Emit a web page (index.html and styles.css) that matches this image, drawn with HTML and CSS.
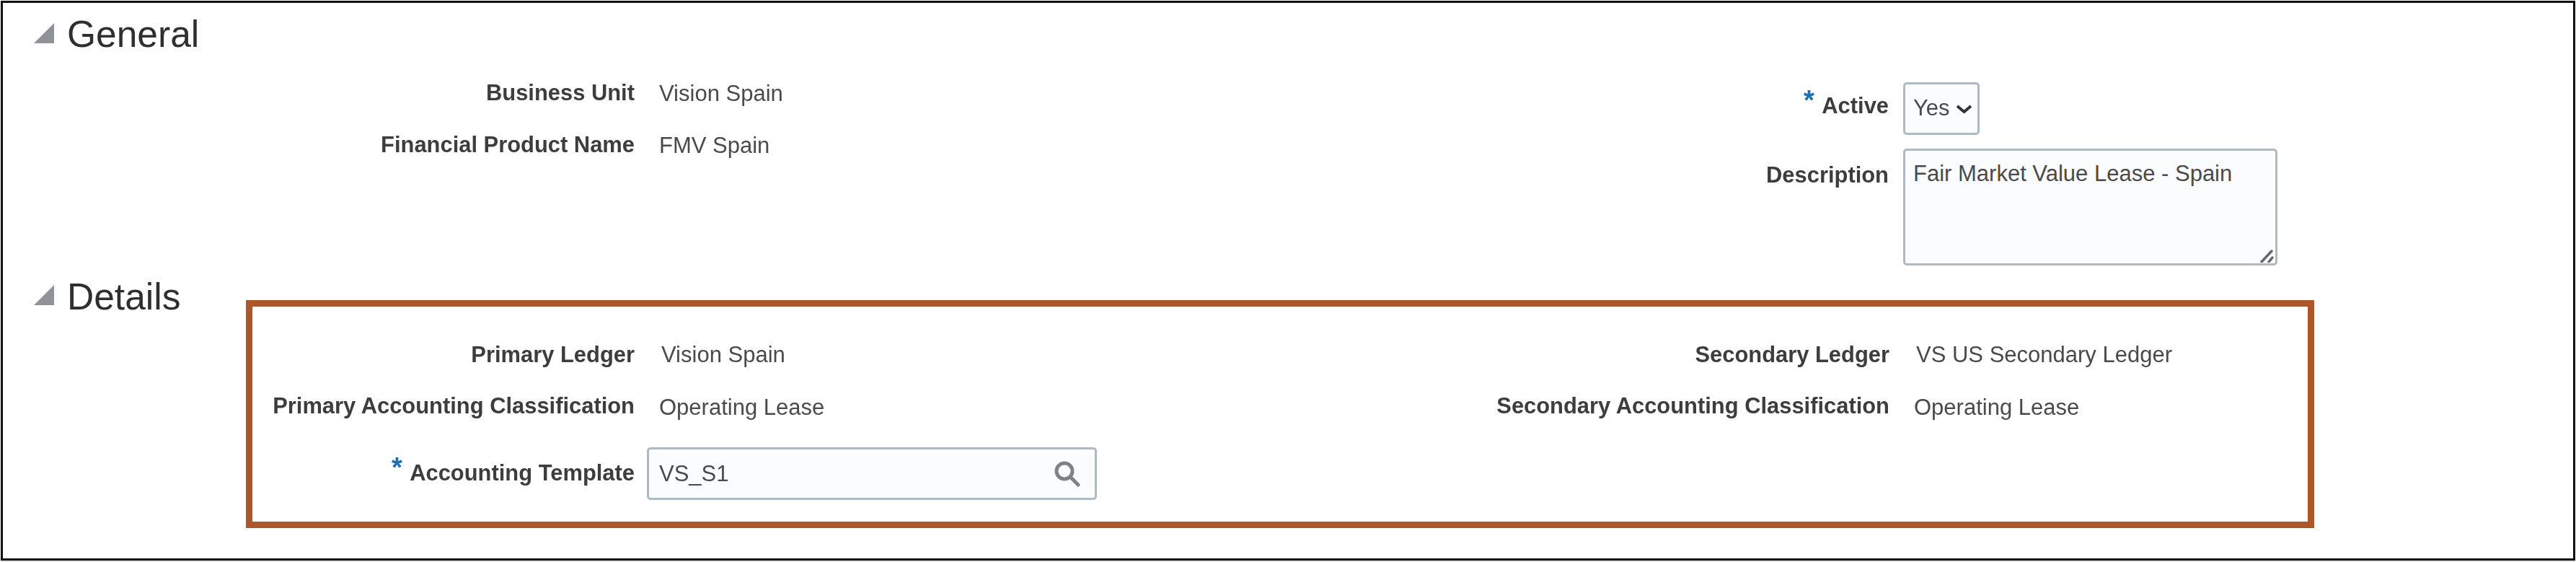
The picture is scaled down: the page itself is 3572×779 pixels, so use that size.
FILE: index.html
```html
<!DOCTYPE html>
<html lang="en">
<head>
<meta charset="utf-8">
<title>Financial Product</title>
<link rel="stylesheet" href="styles.css">
</head>
<body>
<main class="panel">
  <section class="general">
    <h2 class="heading">
      <svg class="disclosure" viewBox="0 0 28 28" aria-hidden="true"><path d="M28 0V28H0Z"/></svg>
      <span>General</span>
    </h2>
    <div class="columns">
      <div class="form form-left">
        <div class="label">Business Unit</div><div class="value">Vision Spain</div>
        <div class="label">Financial Product Name</div><div class="value">FMV Spain</div>
      </div>
      <div class="form form-right">
        <div class="label label-active"><span class="req">*</span> Active</div>
        <div class="select"><span>Yes</span>
          <svg class="chevron" viewBox="0 0 23 12" aria-hidden="true"><path d="M2 2l9.500 8L21 2"/></svg>
        </div>
        <div class="label label-desc">Description</div>
        <div class="textarea">Fair Market Value Lease - Spain
          <svg class="grip" viewBox="0 0 20 18" aria-hidden="true"><path d="M2 17L16 2M12 17l5-6"/></svg>
        </div>
      </div>
    </div>
  </section>
  <section class="details">
    <h2 class="heading heading-details">
      <svg class="disclosure" viewBox="0 0 28 28" aria-hidden="true"><path d="M28 0V28H0Z"/></svg>
      <span>Details</span>
    </h2>
    <div class="callout">
      <div class="form form-detail form-left-detail">
        <div class="label">Primary Ledger</div><div class="value value-nudge">Vision Spain</div>
        <div class="label">Primary Accounting Classification</div><div class="value value-low">Operating Lease</div>
        <div class="label label-template"><span class="req">*</span> Accounting Template</div>
        <div class="lookup"><span>VS_S1</span>
          <svg class="search" viewBox="0 0 36 36" aria-hidden="true"><circle cx="14" cy="14" r="11"/><path d="M22 22l11 11"/></svg>
        </div>
      </div>
      <div class="form form-detail form-right-detail">
        <div class="label">Secondary Ledger</div><div class="value value-nudge">VS US Secondary Ledger</div>
        <div class="label">Secondary Accounting Classification</div><div class="value value-low">Operating Lease</div>
      </div>
    </div>
  </section>
</main>
</body>
</html>
```
FILE: styles.css
```css
* { box-sizing: border-box; }
html, body { margin: 0; padding: 0; background: #fff; }
body {
  width: 3572px;
  height: 779px;
  overflow: hidden;
  padding: 1px;
  font-family: "Liberation Sans", Arial, sans-serif;
  font-size: 31px;
  line-height: 36px;
  color: #4a4a4a;
}
.panel {
  width: 3570px;
  height: 776px;
  border: 3px solid #111;
  background: #fff;
  box-shadow: 0 2px 0 #e2e2e2;
}
.general { height: 388px; padding-top: 21px; }
.heading {
  display: flex;
  align-items: center;
  gap: 18px;
  margin: 0;
  padding-left: 43px;
  height: 44px;
  font-size: 51.500px;
  line-height: 44px;
  font-weight: 400;
  color: #2f2f2f;
  filter: blur(.6px);
}
.disclosure { width: 28px; height: 28px; flex: none; margin-bottom: 3px; }
.disclosure path { fill: #8f9397; }
.columns { display: flex; }
.form { display: grid; filter: blur(.55px); align-content: start; align-items: start; }
.label { text-align: right; font-size: 30.900px; font-weight: 700; color: #3d3d3d; white-space: nowrap; }
.value { white-space: nowrap; padding-left: 17px; }
.req {
  color: #1b6fb5;
  font-size: 38px;
  font-weight: 700;
  vertical-align: 5px;
  line-height: 1px;
  margin-right: 3px;
}
.form-left {
  width: 2415px;
  grid-template-columns: 876px 1fr;
  column-gap: 17px;
  grid-auto-rows: 72px;
  padding-top: 27px;
}
.form-left .label { padding-top: 15px; }
.form-left .value { padding-top: 16px; }
.form-right {
  grid-template-columns: 200px auto;
  column-gap: 20px;
  row-gap: 19px;
  justify-content: start;
  padding-top: 45px;
}
.label-active { padding-top: 15px; }
.label-desc { padding-top: 19px; }
.select, .lookup, .textarea {
  border: 3px solid #adbac4;
  border-radius: 5px;
  background: #fbfcfe;
  color: #4a4a4a;
}
.select {
  width: 106px;
  height: 73px;
  display: flex;
  align-items: center;
  justify-content: space-between;
  padding: 0 7px 2px 11px;
}
.chevron { width: 23px; height: 12px; margin-top: 2px; }
.chevron path { fill: none; stroke: #333; stroke-width: 4; }
.textarea {
  position: relative;
  width: 519px;
  height: 162px;
  padding: 14px 11px;
}
.grip { position: absolute; right: 1px; bottom: 1px; width: 20px; height: 18px; }
.grip path { fill: none; stroke: #666; stroke-width: 3.500; stroke-linecap: round; }
.details { display: flex; align-items: flex-start; }
.heading-details { width: 337px; flex: none; padding-top: 1px; height: 36px; }
.callout {
  flex: none;
  display: flex;
  width: 2868px;
  height: 316px;
  margin-top: 24px;
  border: 9px solid #ad5629;
}
.form-detail {
  column-gap: 17px;
  grid-auto-rows: 71px;
  padding-top: 49px;
}
.form-left-detail { width: 1460px; grid-template-columns: 530px 1fr; }
.form-right-detail { grid-template-columns: 810px 1fr; }
.value-nudge { margin-left: 3px; }
.value-low { padding-top: 2px; }
.label-template { padding-top: 22px; }
.lookup {
  display: flex;
  align-items: center;
  justify-content: space-between;
  width: 624px;
  height: 73px;
  margin-top: 4px;
  padding: 0 20px 0 14px;
}
.search { width: 36px; height: 36px; flex: none; }
.search circle, .search path { fill: none; stroke: #7f8387; stroke-width: 5; stroke-linecap: round; }
```
